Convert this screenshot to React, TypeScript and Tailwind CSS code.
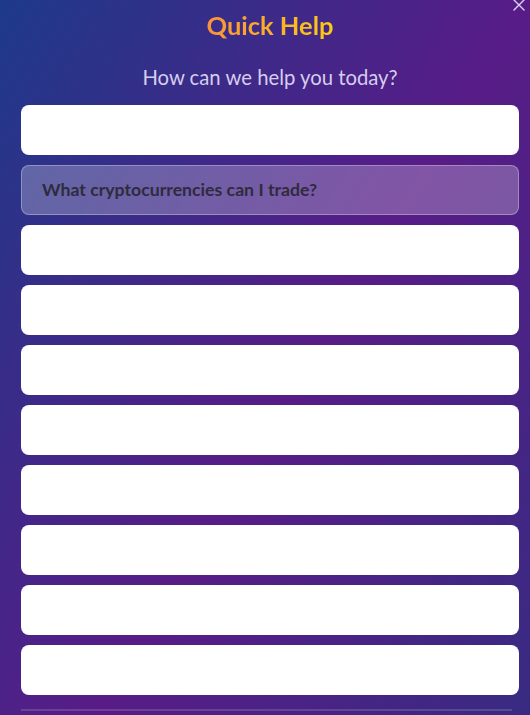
import React from "react";

const questions = [
  "",
  "What cryptocurrencies can I trade?",
  "",
  "",
  "",
  "",
  "",
  "",
  "",
  "",
];

export default function App() {
  return (
    <div className="h-[715px] w-[530px] overflow-hidden">
      <div
        className="relative h-[870px] w-[530px] bg-[linear-gradient(to_bottom_right,#1e3a8a,#581c87,#312e81)] pl-[21px] pr-[11px]"
        style={{ fontFamily: "Lato, 'Open Sans', 'Noto Sans', sans-serif" }}
      >
        <button className="absolute right-[4px] top-[-2px] text-[#d9d3ef]">
          <svg width="14" height="14" viewBox="0 0 14 14" fill="none" stroke="currentColor" strokeWidth="1.4" strokeLinecap="round">
            <path d="M2 2 L12 12 M12 2 L2 12" />
          </svg>
        </button>
        <h2 className="pt-[9px] text-center text-[25.5px] font-bold leading-[32px]">
          <span className="bg-[linear-gradient(to_right,#fb923c,#facc15)] bg-clip-text text-transparent">
            Quick Help
          </span>
        </h2>
        <p className="mt-[23px] text-center text-[20.3px] leading-[26px] text-[#d6cdef]">
          How can we help you today?
        </p>
        <div className="mt-[15px] flex flex-col gap-[10px]">
          {questions.map((q, i) =>
            q ? (
              <div
                key={i}
                className="flex h-[50px] items-center rounded-[8px] border border-white/30 bg-white/25 pl-[20px] text-[17.7px] font-bold text-[#2f2b3d]"
              >
                {q}
              </div>
            ) : (
              <div
                key={i}
                className="h-[50px] rounded-[8px] border border-white/40 bg-white"
              />
            )
          )}
        </div>
        <div className="mr-[7px] mt-[14px] h-[2px] bg-white/15" />
      </div>
    </div>
  );
}
